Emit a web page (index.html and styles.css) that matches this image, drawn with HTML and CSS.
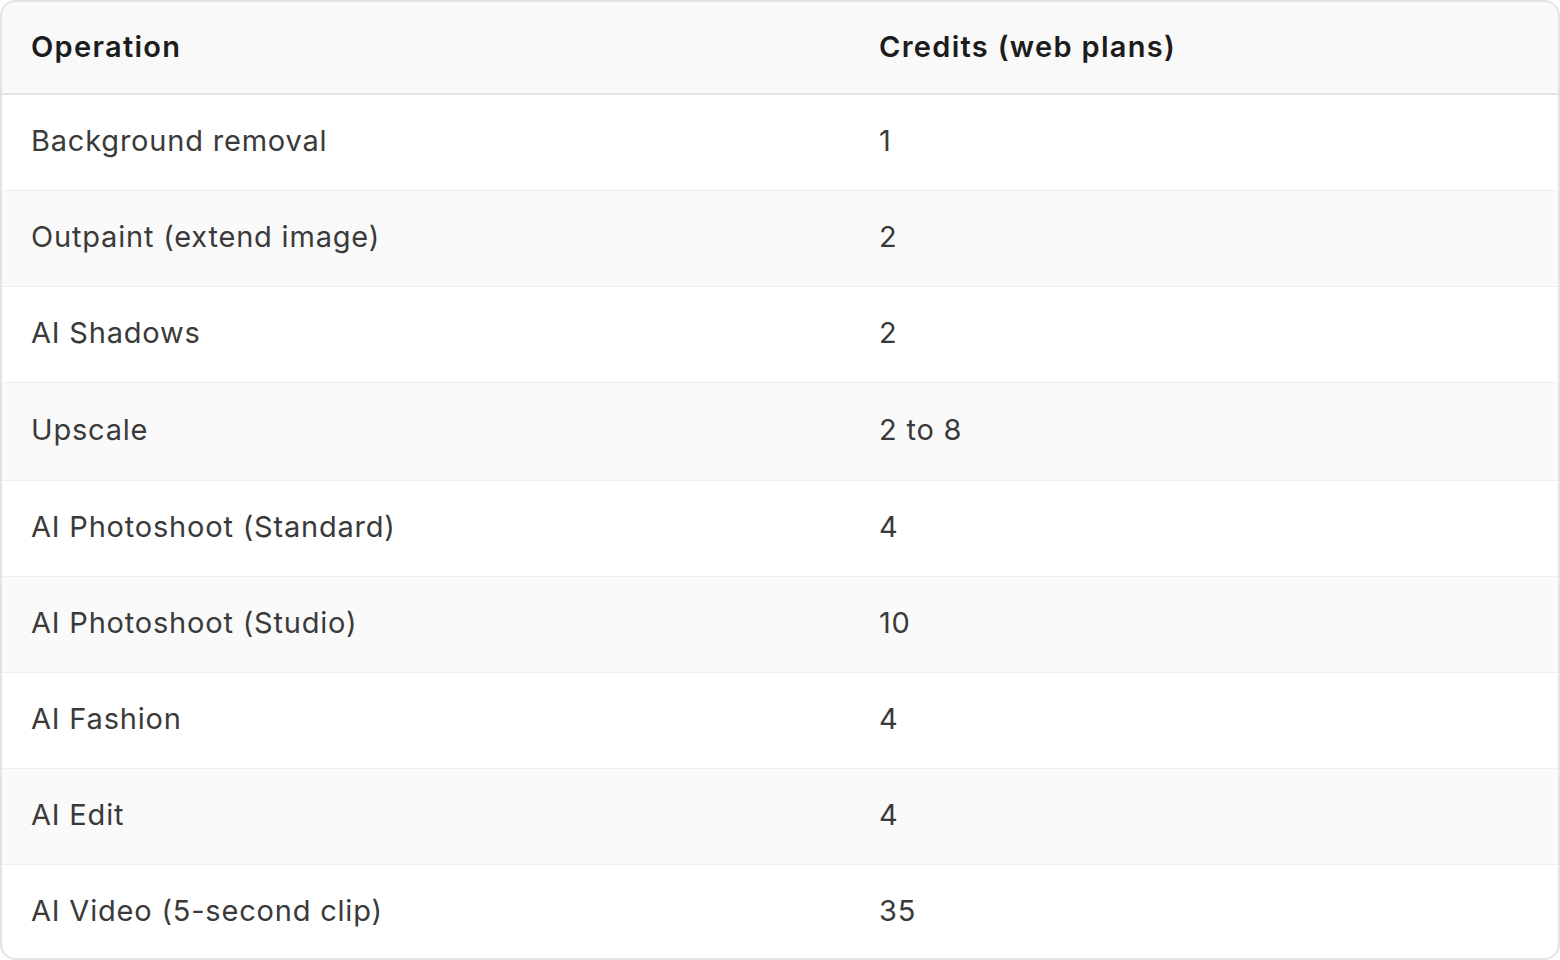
FILE: index.html
```html
<!DOCTYPE html>
<html lang="en">
<head>
<meta charset="utf-8">
<title>Credits</title>
<link rel="stylesheet" href="styles.css">
</head>
<body>
<div class="wrap">
<table class="credits">
<thead>
<tr><th>Operation</th><th>Credits (web plans)</th></tr>
</thead>
<tbody>
<tr><td>Background removal</td><td>1</td></tr>
<tr><td>Outpaint (extend image)</td><td>2</td></tr>
<tr><td>AI Shadows</td><td>2</td></tr>
<tr class="tall"><td>Upscale</td><td>2 to 8</td></tr>
<tr><td>AI Photoshoot (Standard)</td><td>4</td></tr>
<tr><td>AI Photoshoot (Studio)</td><td>10</td></tr>
<tr><td>AI Fashion</td><td>4</td></tr>
<tr><td>AI Edit</td><td>4</td></tr>
<tr><td>AI Video (5-second clip)</td><td>35</td></tr>
</tbody>
</table>
</div>
</body>
</html>
```
FILE: styles.css
```css
html, body {
  margin: 0;
  padding: 0;
  background: #ffffff;
}
.wrap {
  width: 1560px;
  height: 960px;
  box-sizing: border-box;
  border: 2px solid #e3e3e3;
  border-radius: 16px;
  overflow: hidden;
}
.credits {
  width: 100%;
  border-collapse: collapse;
  font-family: Inter, "Liberation Sans", sans-serif;
  font-size: 29px;
  letter-spacing: 0.8px;
  color: #3a3a3a;
}
.credits th,
.credits td {
  text-align: left;
  padding: 0 0 4px 29px;
  vertical-align: middle;
  line-height: 1;
}
.credits th:first-child,
.credits td:first-child {
  width: 819px;
}
.credits thead th {
  height: 89px;
  padding-bottom: 2px;
  background: #f9f9f9;
  color: #1c1c1c;
  font-weight: 600;
  letter-spacing: 1.3px;
  border-bottom: 2px solid #e5e5e5;
}
.credits tbody td {
  height: 91px;
  border-bottom: 1px solid #efefef;
}
.credits tbody tr.tall td {
  height: 93px;
}
.credits tbody tr:last-child td {
  border-bottom: none;
}
.credits tbody tr:nth-child(even) td {
  background: #fafafa;
}
```
